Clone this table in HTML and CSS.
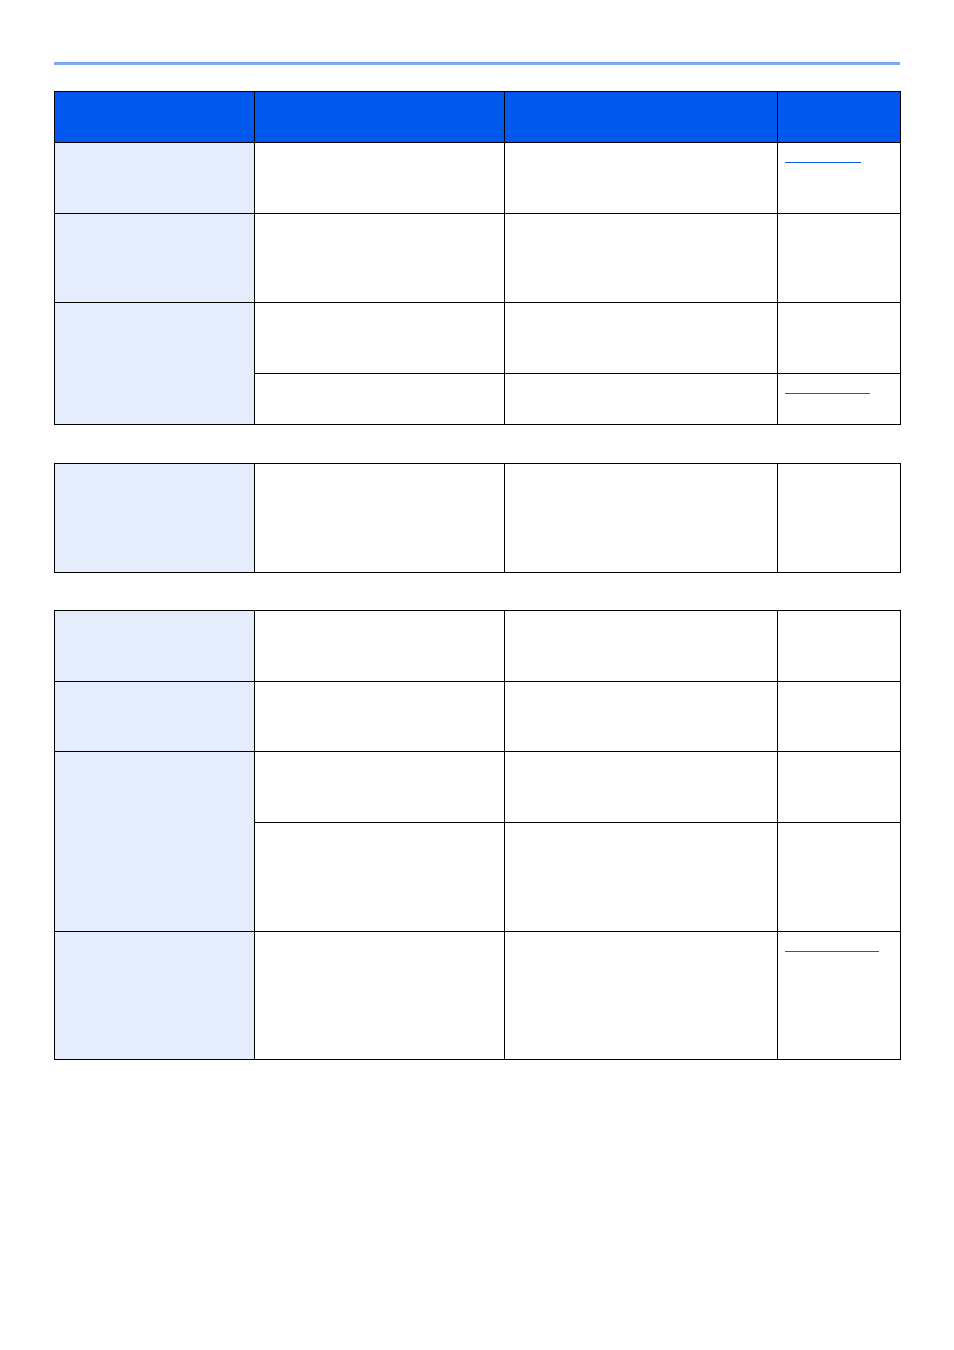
FILE: index.html
```html
<!DOCTYPE html>
<html>
<head>
<meta charset="utf-8">
<link rel="stylesheet" href="styles.css">
</head>
<body>
<div class="page">
  <div class="rule"></div>

  <table class="grid t1">
    <colgroup><col class="c1"><col class="c2"><col class="c3"><col class="c4"></colgroup>
    <thead>
      <tr class="h51"><th></th><th></th><th></th><th></th></tr>
    </thead>
    <tbody>
      <tr class="h71"><td class="key"></td><td></td><td></td><td class="ref"><a class="link l75"></a></td></tr>
      <tr class="h89"><td class="key"></td><td></td><td></td><td></td></tr>
      <tr class="h71"><td class="key" rowspan="2"></td><td></td><td></td><td></td></tr>
      <tr class="h51"><td></td><td></td><td class="ref"><a class="link l85"></a></td></tr>
    </tbody>
  </table>

  <table class="grid t2">
    <colgroup><col class="c1"><col class="c2"><col class="c3"><col class="c4"></colgroup>
    <tbody>
      <tr class="h109"><td class="key"></td><td></td><td></td><td></td></tr>
    </tbody>
  </table>

  <table class="grid t3">
    <colgroup><col class="c1"><col class="c2"><col class="c3"><col class="c4"></colgroup>
    <tbody>
      <tr class="h71"><td class="key"></td><td></td><td></td><td></td></tr>
      <tr class="h70"><td class="key"></td><td></td><td></td><td></td></tr>
      <tr class="h71"><td class="key" rowspan="2"></td><td></td><td></td><td></td></tr>
      <tr class="h109"><td></td><td></td><td></td></tr>
      <tr class="h128"><td class="key"></td><td></td><td></td><td class="ref"><a class="link l94"></a></td></tr>
    </tbody>
  </table>
</div>
</body>
</html>
```

FILE: styles.css
```css
html, body {
  margin: 0;
  padding: 0;
  background: #ffffff;
  font-family: "Liberation Sans", Arial, sans-serif;
}

.page {
  width: 846px;
  margin-left: 54px;
  padding-top: 62px;
}

.rule {
  height: 3px;
  background: #7aa8f2;
}

.grid {
  width: 846px;
  border-collapse: collapse;
  table-layout: fixed;
}

.grid th,
.grid td {
  border: 1px solid #000000;
  padding: 0;
  vertical-align: top;
}

.grid th {
  background: #0058ee;
}

.grid td.key {
  background: #e5ecfb;
}

.c1 { width: 200px; }
.c2 { width: 250px; }
.c3 { width: 273px; }
.c4 { width: 123px; }

.t1 { margin-top: 26px; }
.t2 { margin-top: 38px; }
.t3 { margin-top: 37px; }

.h51 { height: 51px; }
.h70 { height: 70px; }
.h71 { height: 71px; }
.h89 { height: 89px; }
.h109 { height: 109px; }
.h128 { height: 128px; }

.ref {
  padding-top: 0;
}

.link {
  display: block;
  height: 0;
  margin: 19px 0 0 7px;
  border-bottom: 1px solid #0a5bdf;
}

.l75 { width: 76px; }
.l85 { width: 85px; }
.l94 { width: 94px; }
```
